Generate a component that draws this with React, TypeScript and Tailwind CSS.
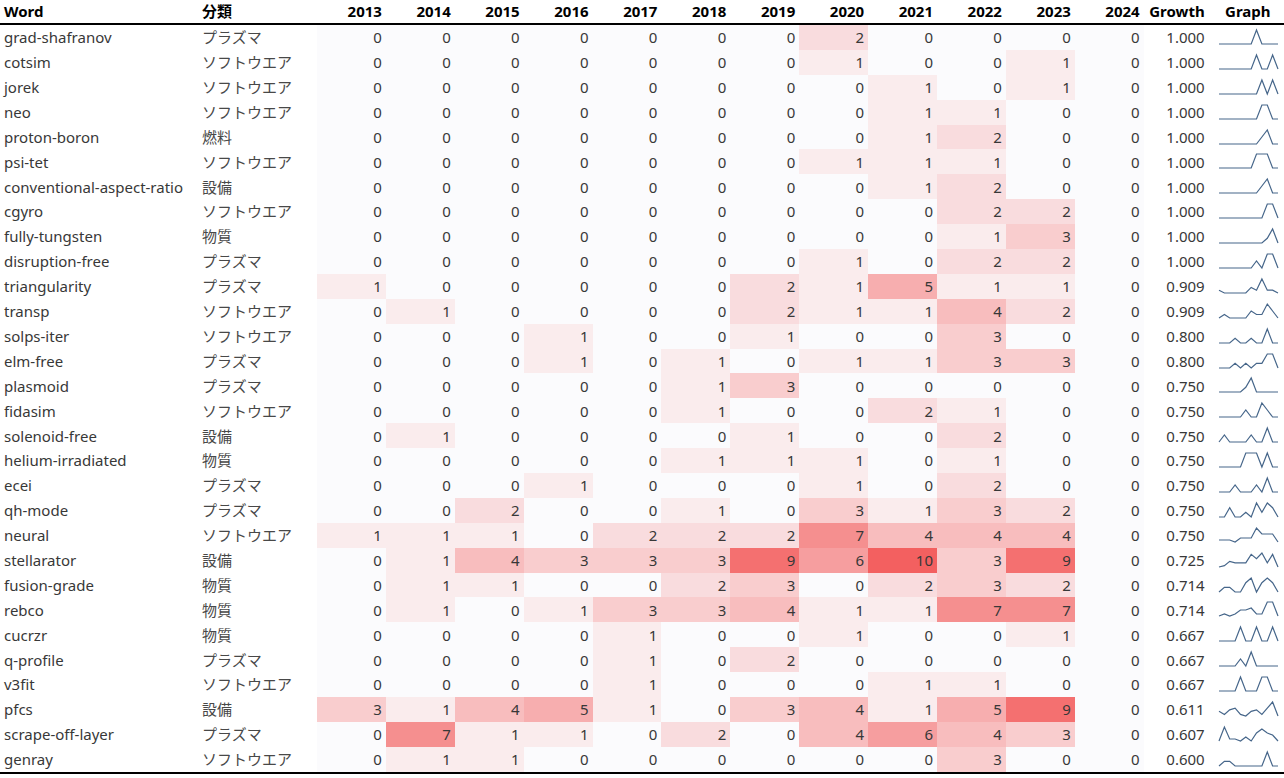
import React from "react";

const YEARS = [2013, 2014, 2015, 2016, 2017, 2018, 2019, 2020, 2021, 2022, 2023, 2024];

type Row = { word: string; cat: string; counts: number[]; growth: string };

const ROWS: Row[] = [
  { word: "grad-shafranov", cat: "プラズマ", counts: [0, 0, 0, 0, 0, 0, 0, 2, 0, 0, 0, 0], growth: "1.000" },
  { word: "cotsim", cat: "ソフトウエア", counts: [0, 0, 0, 0, 0, 0, 0, 1, 0, 0, 1, 0], growth: "1.000" },
  { word: "jorek", cat: "ソフトウエア", counts: [0, 0, 0, 0, 0, 0, 0, 0, 1, 0, 1, 0], growth: "1.000" },
  { word: "neo", cat: "ソフトウエア", counts: [0, 0, 0, 0, 0, 0, 0, 0, 1, 1, 0, 0], growth: "1.000" },
  { word: "proton-boron", cat: "燃料", counts: [0, 0, 0, 0, 0, 0, 0, 0, 1, 2, 0, 0], growth: "1.000" },
  { word: "psi-tet", cat: "ソフトウエア", counts: [0, 0, 0, 0, 0, 0, 0, 1, 1, 1, 0, 0], growth: "1.000" },
  { word: "conventional-aspect-ratio", cat: "設備", counts: [0, 0, 0, 0, 0, 0, 0, 0, 1, 2, 0, 0], growth: "1.000" },
  { word: "cgyro", cat: "ソフトウエア", counts: [0, 0, 0, 0, 0, 0, 0, 0, 0, 2, 2, 0], growth: "1.000" },
  { word: "fully-tungsten", cat: "物質", counts: [0, 0, 0, 0, 0, 0, 0, 0, 0, 1, 3, 0], growth: "1.000" },
  { word: "disruption-free", cat: "プラズマ", counts: [0, 0, 0, 0, 0, 0, 0, 1, 0, 2, 2, 0], growth: "1.000" },
  { word: "triangularity", cat: "プラズマ", counts: [1, 0, 0, 0, 0, 0, 2, 1, 5, 1, 1, 0], growth: "0.909" },
  { word: "transp", cat: "ソフトウエア", counts: [0, 1, 0, 0, 0, 0, 2, 1, 1, 4, 2, 0], growth: "0.909" },
  { word: "solps-iter", cat: "ソフトウエア", counts: [0, 0, 0, 1, 0, 0, 1, 0, 0, 3, 0, 0], growth: "0.800" },
  { word: "elm-free", cat: "プラズマ", counts: [0, 0, 0, 1, 0, 1, 0, 1, 1, 3, 3, 0], growth: "0.800" },
  { word: "plasmoid", cat: "プラズマ", counts: [0, 0, 0, 0, 0, 1, 3, 0, 0, 0, 0, 0], growth: "0.750" },
  { word: "fidasim", cat: "ソフトウエア", counts: [0, 0, 0, 0, 0, 1, 0, 0, 2, 1, 0, 0], growth: "0.750" },
  { word: "solenoid-free", cat: "設備", counts: [0, 1, 0, 0, 0, 0, 1, 0, 0, 2, 0, 0], growth: "0.750" },
  { word: "helium-irradiated", cat: "物質", counts: [0, 0, 0, 0, 0, 1, 1, 1, 0, 1, 0, 0], growth: "0.750" },
  { word: "ecei", cat: "プラズマ", counts: [0, 0, 0, 1, 0, 0, 0, 1, 0, 2, 0, 0], growth: "0.750" },
  { word: "qh-mode", cat: "プラズマ", counts: [0, 0, 2, 0, 0, 1, 0, 3, 1, 3, 2, 0], growth: "0.750" },
  { word: "neural", cat: "ソフトウエア", counts: [1, 1, 1, 0, 2, 2, 2, 7, 4, 4, 4, 0], growth: "0.750" },
  { word: "stellarator", cat: "設備", counts: [0, 1, 4, 3, 3, 3, 9, 6, 10, 3, 9, 0], growth: "0.725" },
  { word: "fusion-grade", cat: "物質", counts: [0, 1, 1, 0, 0, 2, 3, 0, 2, 3, 2, 0], growth: "0.714" },
  { word: "rebco", cat: "物質", counts: [0, 1, 0, 1, 3, 3, 4, 1, 1, 7, 7, 0], growth: "0.714" },
  { word: "cucrzr", cat: "物質", counts: [0, 0, 0, 0, 1, 0, 0, 1, 0, 0, 1, 0], growth: "0.667" },
  { word: "q-profile", cat: "プラズマ", counts: [0, 0, 0, 0, 1, 0, 2, 0, 0, 0, 0, 0], growth: "0.667" },
  { word: "v3fit", cat: "ソフトウエア", counts: [0, 0, 0, 0, 1, 0, 0, 0, 1, 1, 0, 0], growth: "0.667" },
  { word: "pfcs", cat: "設備", counts: [3, 1, 4, 5, 1, 0, 3, 4, 1, 5, 9, 0], growth: "0.611" },
  { word: "scrape-off-layer", cat: "プラズマ", counts: [0, 7, 1, 1, 0, 2, 0, 4, 6, 4, 3, 0], growth: "0.607" },
  { word: "genray", cat: "ソフトウエア", counts: [0, 1, 1, 0, 0, 0, 0, 0, 0, 3, 0, 0], growth: "0.600" },
];

// white-ish -> coral, global max 10
function heat(v: number) {
  const t = Math.min(v / 10, 1);
  const lo = [251, 251, 253];
  const hi = [243, 96, 96];
  const c = lo.map((l, i) => Math.round(l + (hi[i] - l) * t));
  return `rgb(${c[0]},${c[1]},${c[2]})`;
}

function Spark({ values }: { values: number[] }) {
  const max = Math.max(...values, 1);
  const step = 59 / (values.length - 1);
  const pts = values.map((v, i) => `${(7 + i * step).toFixed(1)},${(19 - (v / max) * 14).toFixed(1)}`).join(" ");
  return (
    <svg width="72" height="25" viewBox="0 0 72 25" className="block">
      <polyline points={pts} fill="none" stroke="#46668a" strokeWidth="1.2" strokeLinejoin="miter" />
    </svg>
  );
}

const GRID = "grid grid-cols-[198px_119px_repeat(12,68.9px)_68px_1fr]";

export default function App() {
  return (
    <div className="w-[1284px] h-[778px] bg-white text-[15px] font-['Noto_Sans','Noto_Sans_CJK_JP',sans-serif] overflow-hidden">
      <div className={`${GRID} h-[25px] items-center border-b-2 border-black font-bold text-black`}>
        <div className="pl-[4px]">Word</div>
        <div className="pl-[4px] font-['Noto_Sans_CJK_JP',sans-serif]">分類</div>
        {YEARS.map(y => (
          <div key={y} className="text-right pr-[4px]">{y}</div>
        ))}
        <div className="text-right pr-[7px]">Growth</div>
        <div className="text-center">Graph</div>
      </div>

      <div className="border-b-2 border-black">
        {ROWS.map(r => (
          <div key={r.word} className={`${GRID} h-[24.9px] items-stretch text-[#383838]`}>
            <div className="pl-[4px] flex items-center whitespace-nowrap">{r.word}</div>
            <div className="pl-[4px] flex items-center text-[#484848] font-['Noto_Sans_CJK_JP',sans-serif] text-[15px]">{r.cat}</div>
            {r.counts.map((v, i) => (
              <div key={i} className="flex items-center justify-end pr-[4px]" style={{ backgroundColor: heat(v) }}>
                {v}
              </div>
            ))}
            <div className="flex items-center justify-end pr-[7px]">{r.growth}</div>
            <div className="flex items-center">
              <Spark values={r.counts} />
            </div>
          </div>
        ))}
      </div>
    </div>
  );
}
